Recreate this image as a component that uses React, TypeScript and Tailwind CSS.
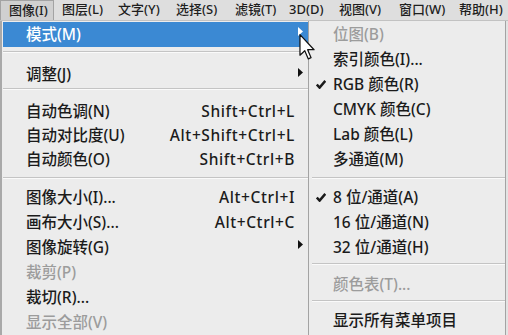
import React from 'react'

const font = { fontFamily: '"Noto Sans", "Noto Sans CJK SC", sans-serif' }

const bar = [
   { label: '图像(I)', w: 'w-[54px]', active: true },
   { label: '图层(L)', w: 'w-[56px]' },
   { label: '文字(Y)', w: 'w-[58px]' },
   { label: '选择(S)', w: 'w-[59px]' },
   { label: '滤镜(T)', w: 'w-[54px]' },
   { label: '3D(D)', w: 'w-[50px]' },
   { label: '视图(V)', w: 'w-[60px]' },
   { label: '窗口(W)', w: 'w-[60px]' },
   { label: '帮助(H)', w: 'w-[57px]' },
]

function Arrow({ white }: { white?: boolean }) {
   return (
      <svg width="6" height="9" viewBox="0 0 6 9" className="mb-[6px]">
         <path d="M0 0 L5 4.5 L0 9 Z" fill={white ? '#ffffff' : '#111111'} />
      </svg>
   )
}

function Check() {
   return (
      <svg width="10" height="9" viewBox="0 0 10 9">
         <path d="M0.8 4.6 L3.6 7.6 L9.3 0.9" stroke="#1a1a1a" strokeWidth="2.5" fill="none" />
      </svg>
   )
}

function Sep({ className }: { className: string }) {
   return (
      <div className={className}>
         <div className="h-px bg-[#c4c4c4]" />
         <div className="h-px bg-[#fafafa]" />
      </div>
   )
}

interface RowProps {
   label: string
   h: string
   shortcut?: string
   arrow?: boolean
   hl?: boolean
   off?: boolean
}

function Row({ label, h, shortcut, arrow, hl, off }: RowProps) {
   return (
      <div
         className={`flex items-center ${h} pl-[23px] ${hl ? 'bg-[#3b89d3] text-white' : off ? 'text-[#9c9c9c]' : 'text-[#1b1b1b]'}`}
      >
         <span className="flex-1 whitespace-nowrap">{label}</span>
         {shortcut && <span className="whitespace-nowrap tracking-[0.6px]">{shortcut}</span>}
         <span className="w-[13px] h-full flex items-center pl-[3px]">{arrow && <Arrow white={hl} />}</span>
      </div>
   )
}

interface SubProps {
   label: string
   h: string
   check?: boolean
   off?: boolean
}

function SubRow({ label, h, check, off }: SubProps) {
   return (
      <div className={`flex items-center ${h} ${off ? 'text-[#9c9c9c]' : 'text-[#1b1b1b]'}`}>
         <span className="w-[24px] flex justify-center">{check && <Check />}</span>
         <span className="whitespace-nowrap">{label}</span>
      </div>
   )
}

export default function App() {
   return (
      <div className="relative w-[508px] h-[335px] overflow-hidden bg-[#e3e3e3] font-medium" style={font}>
         {/* 菜单栏 */}
         <div className="flex h-[20px] text-[13px] text-[#1e1e1e] bg-[#dedede]">
            {bar.map((b) => (
               <div
                  key={b.label}
                  className={`${b.w} flex items-center pl-[8px] whitespace-nowrap ${b.active ? 'bg-[#d0d0d0] border border-b-0 border-[#a3a3a3] pl-[7px]' : ''}`}
               >
                  {b.label}
               </div>
            ))}
         </div>

         <div className="flex h-[315px] border-t border-[#c2c2c2] text-[15.5px] leading-none">
            {/* 主菜单 */}
            <div className="w-[308px] bg-[#ececec] border-l-2 border-[#a9a9a9] pl-px">
               <div className="h-px" />
               <Row label="模式(M)" h="h-[25px]" arrow hl />
               <Sep className="pt-[4px] pb-[10px]" />
               <Row label="调整(J)" h="h-[24px]" arrow />
               <Sep className="pt-[1px] pb-[10px]" />
               <Row label="自动色调(N)" h="h-[24px]" shortcut="Shift+Ctrl+L" />
               <Row label="自动对比度(U)" h="h-[24px]" shortcut="Alt+Shift+Ctrl+L" />
               <Row label="自动颜色(O)" h="h-[24px]" shortcut="Shift+Ctrl+B" />
               <Sep className="pt-[5px] pb-[6px]" />
               <Row label="图像大小(I)..." h="h-[25px]" shortcut="Alt+Ctrl+I" />
               <Row label="画布大小(S)..." h="h-[25px]" shortcut="Alt+Ctrl+C" />
               <Row label="图像旋转(G)" h="h-[25px]" arrow />
               <Row label="裁剪(P)" h="h-[25px]" off />
               <Row label="裁切(R)..." h="h-[25px]" />
               <Row label="显示全部(V)" h="h-[25px]" off />
            </div>

            {/* 子菜单 */}
            <div className="w-[198px] bg-[#ececec] border-l border-r border-[#a3a3a3]">
               <div className="h-[1px]" />
               <SubRow label="位图(B)" h="h-[25px]" off />
               <SubRow label="索引颜色(I)..." h="h-[25px]" />
               <SubRow label="RGB 颜色(R)" h="h-[25px]" check />
               <SubRow label="CMYK 颜色(C)" h="h-[25px]" />
               <SubRow label="Lab 颜色(L)" h="h-[25px]" />
               <SubRow label="多通道(M)" h="h-[25px]" />
               <Sep className="pt-[5px] pb-[6px] pl-[3px]" />
               <SubRow label="8 位/通道(A)" h="h-[25px]" check />
               <SubRow label="16 位/通道(N)" h="h-[25px]" />
               <SubRow label="32 位/通道(H)" h="h-[25px]" />
               <Sep className="pt-[3px] pb-[8px] pl-[3px]" />
               <SubRow label="颜色表(T)..." h="h-[24px]" off />
               <Sep className="pt-[3px] pb-[6px] pl-[3px]" />
               <SubRow label="显示所有菜单项目" h="h-[26px]" />
            </div>
         </div>

         {/* 鼠标指针 */}
         <svg width="17" height="26" viewBox="0 0 12 19" className="absolute left-[299px] top-[34px]">
            <path
               d="M0.5 0.5 L0.5 15.5 L4 12.2 L6.6 18.2 L8.6 17.3 L6.1 11.5 L10.8 11.5 Z"
               fill="#ffffff"
               stroke="#111111"
               strokeWidth="0.9"
               strokeLinejoin="round"
            />
         </svg>
      </div>
   )
}
